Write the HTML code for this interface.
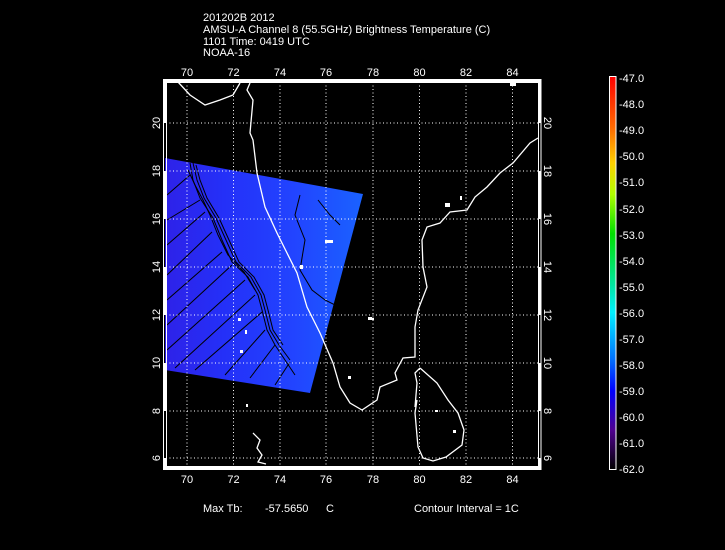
<!DOCTYPE html>
<html><head><meta charset="utf-8"><style>
html,body{margin:0;padding:0;background:#000;}
body{width:725px;height:550px;overflow:hidden;position:relative;font-family:"Liberation Sans",sans-serif;color:#fff;}
svg{position:absolute;left:0;top:0;}
text{fill:#fff;font-family:"Liberation Sans",sans-serif;font-size:11px;}
</style></head><body>
<svg width="725" height="550" viewBox="0 0 725 550">
<defs>
<linearGradient id="sw" x1="0" y1="0" x2="1" y2="0">
<stop offset="0" stop-color="#2e22e8"/>
<stop offset="0.3" stop-color="#2430f8"/>
<stop offset="0.65" stop-color="#2244ff"/>
<stop offset="1" stop-color="#1a62ff"/>
</linearGradient>
<linearGradient id="cb" x1="0" y1="0" x2="0" y2="1">
<stop offset="0" stop-color="#ff0000"/>
<stop offset="0.13" stop-color="#ff6a00"/>
<stop offset="0.22" stop-color="#ffd000"/>
<stop offset="0.3" stop-color="#b0ff00"/>
<stop offset="0.4" stop-color="#00e000"/>
<stop offset="0.53" stop-color="#00e6a0"/>
<stop offset="0.6" stop-color="#00f0ff"/>
<stop offset="0.72" stop-color="#0070ff"/>
<stop offset="0.8" stop-color="#0000ff"/>
<stop offset="0.9" stop-color="#500090"/>
<stop offset="1" stop-color="#000000"/>
</linearGradient>
</defs>
<text x="203" y="21">201202B 2012</text>
<text x="203" y="33">AMSU-A Channel 8 (55.5GHz) Brightness Temperature (C)</text>
<text x="203" y="45">1101 Time: 0419 UTC</text>
<text x="203" y="56">NOAA-16</text>

<polygon points="165,158 363,194 310,393 165,370" fill="url(#sw)"/>
<g stroke="#000" fill="none" stroke-width="1">
<polyline points="190,163 193,180 200,198 213,218 222,240 232,262 248,277 258,295 262,310 267,330 275,345 285,360 295,375"/>
<polyline points="193,163 197,180 204,198 216,218 226,240 236,262 251,277 261,295 265,310 270,330 279,345 290,360"/>
<polyline points="196,165 200,180 207,198 219,218 229,240 239,262 254,277 264,295 268,310 273,330 283,345"/>
<polyline points="188,170 195,185 203,200 210,215 218,235 228,255 244,272 255,290"/>
<polyline points="200,200 167,220"/><polyline points="205,212 167,245"/>
<polyline points="212,232 167,275"/><polyline points="222,252 167,300"/>
<polyline points="232,265 167,325"/><polyline points="245,280 167,350"/>
<polyline points="255,295 175,368"/><polyline points="262,312 195,370"/>
<polyline points="265,330 225,375"/><polyline points="275,345 250,378"/>
<polyline points="290,362 275,385"/>
<polyline points="190,175 167,195"/>
<polyline points="300,195 295,215 305,240 300,270 312,290 325,300 345,310"/>
<polyline points="318,200 330,215 340,225"/>
</g>

<g stroke="#fff" stroke-width="1" stroke-dasharray="1,2.5" fill="none">
<line x1="187" y1="82" x2="187" y2="467"/><line x1="233.5" y1="82" x2="233.5" y2="467"/>
<line x1="280" y1="82" x2="280" y2="467"/><line x1="326" y1="82" x2="326" y2="467"/>
<line x1="373" y1="82" x2="373" y2="467"/><line x1="419.5" y1="82" x2="419.5" y2="467"/>
<line x1="466" y1="82" x2="466" y2="467"/><line x1="512.5" y1="82" x2="512.5" y2="467"/>
<line x1="166" y1="123" x2="539" y2="123"/><line x1="166" y1="171" x2="539" y2="171"/>
<line x1="166" y1="219" x2="539" y2="219"/><line x1="166" y1="267" x2="539" y2="267"/>
<line x1="166" y1="315" x2="539" y2="315"/><line x1="166" y1="363" x2="539" y2="363"/>
<line x1="166" y1="411" x2="539" y2="411"/><line x1="166" y1="458" x2="539" y2="458"/>
</g>

<g stroke="#fff" stroke-width="1.3" fill="none">
<polyline points="178,82 190,95 205,105 220,100 233,95 240,83"/>
<polyline points="250,83 247,90 253,100 250,133 253,140 257,173 265,207 277,233 287,253 297,273 307,307 320,333 333,363 340,387 350,403 362,410 377,400 380,387 397,380 395,373 403,358 415,357 415,327 418,310 427,287 423,267 422,240 427,227 440,223 450,212 467,210 475,197 487,187 500,173 513,163 530,143 538,138"/>
<polyline points="420,368 437,383 448,400 458,413 464,430 462,445 446,457 433,461 423,458 418,447 415,413 417,400 415,407 417,383 415,373 420,368"/>
<polyline points="253,433 260,440 257,448 262,455 258,462 266,464"/>
</g>
<g fill="#fff">
<rect x="325" y="240" width="8" height="3"/><rect x="300" y="265" width="3" height="4"/>
<rect x="238" y="318" width="3" height="3"/><rect x="240" y="350" width="3" height="3"/>
<rect x="245" y="330" width="2" height="4"/><rect x="370" y="318" width="4" height="2"/>
<rect x="368" y="317" width="4" height="3"/><rect x="348" y="376" width="3" height="3"/>
<rect x="445" y="203" width="5" height="4"/><rect x="460" y="196" width="2" height="4"/>
<rect x="246" y="404" width="2" height="3"/><rect x="510" y="82" width="6" height="4"/>
<rect x="453" y="430" width="3" height="3"/><rect x="435" y="410" width="3" height="2"/>
</g>

<rect x="163.5" y="79.5" width="377.5" height="390" fill="none" stroke="#fff" stroke-width="1"/>
<rect x="166.5" y="82.5" width="372" height="384" fill="none" stroke="#fff" stroke-width="1"/>
<rect x="164" y="80" width="377" height="2.5" fill="#fff"/>
<rect x="164" y="466.5" width="377" height="2.5" fill="#fff"/>
<g fill="#fff">
<rect x="164" y="80" width="2.5" height="43"/><rect x="538.5" y="80" width="2.5" height="43"/>
<rect x="164" y="171" width="2.5" height="48"/><rect x="538.5" y="171" width="2.5" height="48"/>
<rect x="164" y="267" width="2.5" height="48"/><rect x="538.5" y="267" width="2.5" height="48"/>
<rect x="164" y="363" width="2.5" height="48"/><rect x="538.5" y="363" width="2.5" height="48"/>
<rect x="164" y="458" width="2.5" height="11"/><rect x="538.5" y="458" width="2.5" height="11"/>
</g>

<g text-anchor="middle">
<text x="187" y="76">70</text><text x="233.5" y="76">72</text><text x="280" y="76">74</text><text x="326" y="76">76</text>
<text x="373" y="76">78</text><text x="419.5" y="76">80</text><text x="466" y="76">82</text><text x="512.5" y="76">84</text>
<text x="187" y="483">70</text><text x="233.5" y="483">72</text><text x="280" y="483">74</text><text x="326" y="483">76</text>
<text x="373" y="483">78</text><text x="419.5" y="483">80</text><text x="466" y="483">82</text><text x="512.5" y="483">84</text>
</g>
<g text-anchor="middle">
<text transform="translate(160,123) rotate(-90)">20</text><text transform="translate(160,171) rotate(-90)">18</text>
<text transform="translate(160,219) rotate(-90)">16</text><text transform="translate(160,267) rotate(-90)">14</text>
<text transform="translate(160,315) rotate(-90)">12</text><text transform="translate(160,363) rotate(-90)">10</text>
<text transform="translate(160,411) rotate(-90)">8</text><text transform="translate(160,458) rotate(-90)">6</text>
<text transform="translate(544,123) rotate(90)">20</text><text transform="translate(544,171) rotate(90)">18</text>
<text transform="translate(544,219) rotate(90)">16</text><text transform="translate(544,267) rotate(90)">14</text>
<text transform="translate(544,315) rotate(90)">12</text><text transform="translate(544,363) rotate(90)">10</text>
<text transform="translate(544,411) rotate(90)">8</text><text transform="translate(544,458) rotate(90)">6</text>
</g>

<rect x="609.5" y="76.5" width="6.5" height="393" fill="url(#cb)" stroke="#fff" stroke-width="1"/>
<g font-size="11">
<text x="619" y="82">-47.0</text><text x="619" y="108">-48.0</text><text x="619" y="134">-49.0</text>
<text x="619" y="160">-50.0</text><text x="619" y="186">-51.0</text><text x="619" y="213">-52.0</text>
<text x="619" y="239">-53.0</text><text x="619" y="265">-54.0</text><text x="619" y="291">-55.0</text>
<text x="619" y="317">-56.0</text><text x="619" y="343">-57.0</text><text x="619" y="369">-58.0</text>
<text x="619" y="395">-59.0</text><text x="619" y="421">-60.0</text><text x="619" y="447">-61.0</text>
<text x="619" y="473">-62.0</text>
</g>

<text x="203" y="512">Max Tb:</text>
<text x="265" y="512">-57.5650</text>
<text x="326" y="512">C</text>
<text x="414" y="512">Contour Interval = 1C</text>
</svg>
</body></html>
